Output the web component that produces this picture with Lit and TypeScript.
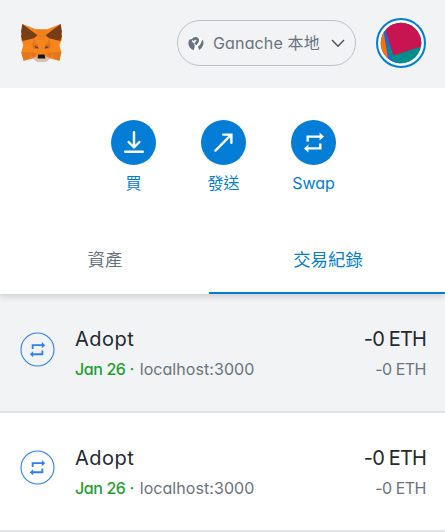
import { LitElement, html, css, svg } from "lit";
import { customElement } from "lit/decorators.js";

const swapShape = svg`
  <path d="M3.7 9.6V4.6H16.5" fill="none" stroke="currentColor" stroke-width="2.4"/>
  <path d="M15.6 .6L20 4.6L15.6 8.6Z" fill="currentColor"/>
  <path d="M16.3 11.4V16.4H3.5" fill="none" stroke="currentColor" stroke-width="2.4"/>
  <path d="M4.4 12.4L0 16.4L4.4 20.4Z" fill="currentColor"/>`;

const fox = html`<svg class="fox" viewBox="33 36 124 116">
  <path fill="#f6851b" d="M37 36L78 52H112L153 36L157 82L149 99L155 121L149 147L121 140L109 149H81L69 140L41 147L34 121L40 99L33 82Z"/>
  <path fill="#e4761b" d="M78 52H112L106 84H84Z" opacity=".3"/>
  <path fill="#763d16" d="M37 36L83 70L72 79L38 87L36 80L33 73L35 66L33 60Z"/>
  <path fill="#763d16" d="M153 36L107 70L118 79L152 87L154 80L157 73L155 66L157 60Z"/>
  <path fill="#e4761b" d="M34 121H58L62 138L41 147ZM155 121H131L128 138L149 147ZM72 79L84 104L66 99ZM118 79L106 104L124 99Z"/>
  <path fill="#d5691c" d="M68 101L83 98L87 111L71 110ZM122 101L107 98L103 111L119 110Z"/>
  <path fill="#4b4743" d="M75 103L84 105L85 110L77 108ZM115 103L106 105L105 110L113 108Z"/>
  <path fill="#e4751f" d="M58 121L80 124L70 140ZM131 121L110 124L121 140Z"/>
  <path fill="#d7c1b3" d="M68 139L84 133H106L122 139L109 149H81Z"/>
  <path fill="#161616" d="M85 128H104L107 140H83Z"/>
</svg>`;

@customElement("app-root")
export class AppRoot extends LitElement {
  static styles = css`
    :host { display: block; height: 532px; overflow: hidden; background: #fff;
      font-family: Inter, "Noto Sans CJK TC", sans-serif; font-feature-settings: "cv11", "ss03"; color: #24292e; }
    * { box-sizing: border-box; }
    svg { display: block; flex: none; }
    header { height: 88px; background: #f1f3f5; display: flex; align-items: flex-start; padding: 18px 19px 0 21px; }
    .fox { width: 41px; height: 38.5px; margin-top: 6px; }
    .network { margin: 2px 20px 0 auto; width: 179px; height: 46px; border: 1px solid #bbc0c5; border-radius: 23px;
      display: flex; align-items: center; padding-left: 10px; color: #6a737d; font-size: 16px; }
    .network span { width: 108px; margin: -2px 10px 0 9px; white-space: nowrap; letter-spacing: .15px; }
    .avatar { width: 50px; height: 50px; }
    .actions { display: flex; justify-content: center; padding: 32px 0 0 2px; height: 137px; }
    .action { width: 90px; display: flex; flex-direction: column; align-items: center; color: #037dd6;
      font-size: 16px; line-height: 22px; }
    .disc { width: 45px; height: 45px; border-radius: 50%; background: #037dd6; color: #fff; margin-bottom: 7px;
      display: grid; place-items: center; }
    .swap { letter-spacing: -.1px; }
    nav { display: flex; height: 69px; box-shadow: 0 3px 6px rgba(0,0,0,.14); clip-path: inset(0 0 -12px 0);
      position: relative; background: #fff; }
    .tab { width: 209px; text-align: center; font-size: 17.4px; line-height: 26px; padding: 22px 0 0 1px; color: #6a737d; }
    .tab.on { width: 236px; color: #037dd6; border-bottom: 2px solid #037dd6; padding-left: 2px; }
    .row { height: 119px; border-bottom: 2px solid #e2e4e5; display: flex; padding: 32px 19px 0 20px; white-space: nowrap; }
    .row.hot { background: #f1f3f5; }
    .sig { width: 35px; height: 35px; margin: 6px 20px 0 0; color: #2f80ed; }
    .row:not(.hot) .sig { margin-top: 5px; }
    .main { flex: 1; }
    .title, .amount { font-size: 20px; line-height: 26px; }
    .title { letter-spacing: .5px; }
    .sub { font-size: 16px; line-height: 22px; margin-top: 6px; color: #6a737d; }
    .date { color: #1ea032; font-weight: 500; letter-spacing: -.4px; margin-right: 2px; }
    .site { letter-spacing: .06px; }
    .end { text-align: right; }
    .end .sub { letter-spacing: -.5px; }
    .amount { letter-spacing: -.85px; }
  `;

  private row(hot: boolean) {
    return html`<div class="row ${hot ? "hot" : ""}">
      <svg class="sig" viewBox="0 0 35 35"><circle cx="17.5" cy="17.5" r="16.5" fill="none" stroke="currentColor" stroke-width="1.1"/>
        <g transform="translate(9.8 9.6) scale(.77)">${swapShape}</g></svg>
      <div class="main"><div class="title">Adopt</div>
        <div class="sub"><span class="date">Jan 26 · </span><span class="site">localhost:3000</span></div></div>
      <div class="end"><div class="amount">-0 ETH</div><div class="sub">-0 ETH</div></div>
    </div>`;
  }

  render() {
    return html`
      <header>${fox}
        <div class="network">
          <svg width="16" height="16" viewBox="0 0 16 16"><circle cx="8" cy="8" r="7.6" fill="#fff"/>
            <path fill="#6a737d" d="M1.2 5Q3 3.4 4.2 4.6L3.8 6.6L6 8.4L6.8 11L5.8 15.2Q.2 13 .4 8Q.5 6.2 1.2 5Z"/>
            <path d="M4.6 5.4Q5.8 3 8 3.4Q10.4 4 9.4 6.4L7.4 9.6" fill="none" stroke="#6a737d" stroke-width="2.8"/>
            <path fill="#6a737d" d="M14.6 4.6Q16 7 15.4 9.6Q14.6 13 11 15L10 11.8L12.2 9.4Z"/></svg>
          <span>Ganache 本地</span>
          <svg width="14" height="9" viewBox="0 0 14 9"><path d="M1 1L7 7.3L13 1" fill="none" stroke="#4d5257" stroke-width="1.4"/></svg>
        </div>
        <svg class="avatar" viewBox="0 0 50 50">
          <defs><clipPath id="c"><circle cx="25" cy="25" r="20.3"/></clipPath></defs>
          <circle cx="25" cy="25" r="24" fill="#fff" fill-opacity=".4" stroke="#037dd6" stroke-width="2"/>
          <g clip-path="url(#c)"><path fill="#018e8c" d="M0 0H50V50H0Z"/>
            <path fill="#2362e1" d="M7 6L18 39L26 48H11L6 30Z"/>
            <path fill="#018e8c" d="M11 24L17.5 37L27 46H20L12 35Z"/>
            <path fill="#f97304" d="M0 10H7L12 41H0Z"/>
            <path fill="#c81450" d="M8 8L25 0H50V27L17.5 37.5Z"/></g>
        </svg>
      </header>
      <div class="actions">
        <div class="action"><div class="disc"><svg width="20" height="23" viewBox="0 0 20 23" fill="none" stroke="#fff" stroke-width="2.4" stroke-linecap="round" stroke-linejoin="round"><path d="M10 1.2V16M4.6 11L10 16.5L15.4 11M1.2 20.8H18.8"/></svg></div>買</div>
        <div class="action"><div class="disc"><svg width="19" height="19" viewBox="0 0 19 19" fill="none" stroke="#fff" stroke-width="2.4" stroke-linecap="round" stroke-linejoin="miter"><path d="M1.4 17.6L16.8 2.2M9.2 1.6H17.4V9.8"/></svg></div>發送</div>
        <div class="action"><div class="disc"><svg width="20" height="21" viewBox="0 0 20 21">${swapShape}</svg></div><span class="swap">Swap</span></div>
      </div>
      <nav><div class="tab">資產</div><div class="tab on">交易紀錄</div></nav>
      ${this.row(true)}${this.row(false)}`;
  }
}
